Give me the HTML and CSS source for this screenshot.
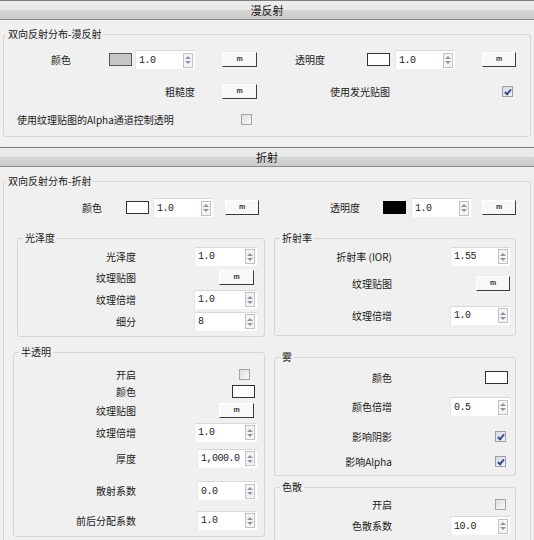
FILE: index.html
```html
<!DOCTYPE html>
<html lang="zh">
<head>
  <meta charset="UTF-8">
  <title>材质参数</title>
  <link rel="stylesheet" href="styles.css">
</head>
<body>
  <div class="panel-head">漫反射</div>

  <fieldset class="group diffuse">
    <legend>双向反射分布-漫反射</legend>
    <div class="diffuse-grid">
      <span class="lbl c1">颜色</span>
      <span class="swatch gray c2"></span>
      <span class="spin c3"><span class="val">1.0</span><span class="arrows"></span></span>
      <span class="btn-m c4">m</span>
      <span class="lbl c5">透明度</span>
      <span class="swatch c6"></span>
      <span class="spin c7"><span class="val">1.0</span><span class="arrows"></span></span>
      <span class="btn-m c8">m</span>

      <span class="lbl left-span">粗糙度</span>
      <span class="btn-m c4">m</span>
      <span class="lbl right-span">使用发光贴图</span>
      <span class="check on c8"></span>

      <span class="lbl long-label">使用纹理贴图的Alpha通道控制透明</span>
      <span class="check c4 alpha-check"></span>
    </div>
  </fieldset>

  <div class="panel-head">折射</div>

  <fieldset class="group refract">
    <legend>双向反射分布-折射</legend>
    <div class="refract-top">
      <span class="lbl c1">颜色</span>
      <span class="swatch c2"></span>
      <span class="spin c3"><span class="val">1.0</span><span class="arrows"></span></span>
      <span class="btn-m c4">m</span>
      <span class="lbl c5">透明度</span>
      <span class="swatch black c6"></span>
      <span class="spin c7"><span class="val">1.0</span><span class="arrows"></span></span>
      <span class="btn-m c8">m</span>
    </div>

    <div class="sub-columns">
      <div class="col left-col">
        <fieldset class="group sub gloss">
          <legend>光泽度</legend>
          <div class="rows">
            <span class="lbl">光泽度</span>
            <span class="spin wide"><span class="val">1.0</span><span class="arrows"></span></span>
            <span class="lbl">纹理贴图</span>
            <span class="btn-m">m</span>
            <span class="lbl">纹理倍增</span>
            <span class="spin wide"><span class="val">1.0</span><span class="arrows"></span></span>
            <span class="lbl">细分</span>
            <span class="spin wide"><span class="val">8</span><span class="arrows"></span></span>
          </div>
        </fieldset>

        <fieldset class="group sub trans">
          <legend>半透明</legend>
          <div class="rows">
            <span class="lbl">开启</span>
            <span class="check"></span>
            <span class="lbl">颜色</span>
            <span class="swatch"></span>
            <span class="lbl">纹理贴图</span>
            <span class="btn-m">m</span>
            <span class="lbl">纹理倍增</span>
            <span class="spin wide"><span class="val">1.0</span><span class="arrows"></span></span>
            <span class="lbl">厚度</span>
            <span class="spin"><span class="val">1,000.0</span><span class="arrows"></span></span>
            <span class="lbl">散射系数</span>
            <span class="spin"><span class="val">0.0</span><span class="arrows"></span></span>
            <span class="lbl">前后分配系数</span>
            <span class="spin"><span class="val">1.0</span><span class="arrows"></span></span>
          </div>
        </fieldset>
      </div>

      <div class="col right-col">
        <fieldset class="group sub ior">
          <legend>折射率</legend>
          <div class="rows">
            <span class="lbl">折射率 (IOR)</span>
            <span class="spin"><span class="val">1.55</span><span class="arrows"></span></span>
            <span class="lbl">纹理贴图</span>
            <span class="btn-m">m</span>
            <span class="lbl">纹理倍增</span>
            <span class="spin"><span class="val">1.0</span><span class="arrows"></span></span>
          </div>
        </fieldset>

        <fieldset class="group sub fog">
          <legend>雾</legend>
          <div class="rows">
            <span class="lbl">颜色</span>
            <span class="swatch"></span>
            <span class="lbl">颜色倍增</span>
            <span class="spin"><span class="val">0.5</span><span class="arrows"></span></span>
            <span class="lbl">影响阴影</span>
            <span class="check on"></span>
            <span class="lbl">影响Alpha</span>
            <span class="check on"></span>
          </div>
        </fieldset>

        <fieldset class="group sub disp">
          <legend>色散</legend>
          <div class="rows">
            <span class="lbl">开启</span>
            <span class="check"></span>
            <span class="lbl">色散系数</span>
            <span class="spin"><span class="val">10.0</span><span class="arrows"></span></span>
          </div>
        </fieldset>
      </div>
    </div>
  </fieldset>
</body>
</html>
```

FILE: styles.css
```css
body {
  margin: 0;
  background: #f0f0f0;
  font-family: "Noto Sans CJK SC", "Noto Sans", sans-serif;
  font-size: 10px;
  color: #1a1a1a;
}

.panel-head {
  height: 18px;
  line-height: 18px;
  border-top: 1px solid #7d7d7d;
  border-bottom: 1px solid #8a8a8a;
  background: linear-gradient(#ececec 0, #e7e7e7 50%, #d4d4d4 50%, #cccccc 100%);
  text-align: center;
  font-size: 11px;
}

/* group boxes */
.group {
  margin: 7px 3px 0;
  padding: 0;
  border: 1px solid #d6d6d6;
  border-radius: 3px;
  min-width: 0;
}

.group legend {
  margin-left: 2px;
  padding: 0 2px;
  line-height: 14px;
  font-size: 10px;
}

.diffuse {
  margin-bottom: 10px;
  padding: 5px 0 7px;
}

.refract {
  padding: 10px 0 4px;
}

.lbl {
  white-space: nowrap;
}

/* controls */
.swatch {
  box-sizing: border-box;
  width: 23px;
  height: 13px;
  border: 1px solid #333;
  background: #fff;
}

.swatch.gray {
  border-color: #555;
  background: #c6c6c6;
}

.swatch.black {
  background: #000;
  border-color: #000;
}

.spin {
  box-sizing: border-box;
  display: flex;
  align-items: center;
  width: 60px;
  height: 19px;
  background: #fff;
  border-top: 1px solid #d9d9d9;
  border-left: 1px solid #e6e6e6;
}

.spin.wide {
  width: 63px;
}

.spin .val {
  padding-left: 3px;
  font-family: "Liberation Mono", "DejaVu Sans Mono", monospace;
  font-size: 10px;
  letter-spacing: -0.5px;
  color: #222;
}

.arrows {
  box-sizing: border-box;
  width: 10px;
  height: 15px;
  margin: 0 2px 0 auto;
  border: 1px solid #c2c2c2;
  background: #f4f4f4;
  display: flex;
  flex-direction: column;
  align-items: center;
  justify-content: center;
  gap: 2px;
}

.arrows::before {
  content: "";
  border: 3px solid transparent;
  border-top: 0;
  border-bottom: 3px solid #8d96a6;
}

.arrows::after {
  content: "";
  border: 3px solid transparent;
  border-bottom: 0;
  border-top: 3px solid #8d96a6;
}

.btn-m {
  box-sizing: border-box;
  width: 35px;
  height: 15px;
  line-height: 12px;
  text-align: center;
  background: #f8f8f8;
  border: 1px solid;
  border-color: #ffffff #3c3c3c #3c3c3c #ffffff;
  font-family: "Liberation Sans", sans-serif;
  font-size: 7px;
  font-weight: bold;
  color: #333;
}

.check {
  box-sizing: border-box;
  width: 11px;
  height: 11px;
  border: 1px solid #a3a3a3;
  background: linear-gradient(135deg, #dedede, #fafafa);
  display: flex;
  justify-content: center;
}

.check.on {
  border-color: #9aa0aa;
  background: linear-gradient(135deg, #d5dbe4, #f4f6f9);
}

.check.on::after {
  content: "";
  width: 2px;
  height: 5px;
  margin-top: 1px;
  border-right: 2px solid #34508a;
  border-bottom: 2px solid #34508a;
  transform: rotate(40deg);
}

/* top grids: columns follow the control positions of the panel */
.diffuse-grid,
.refract-top {
  display: grid;
  align-items: center;
}

.diffuse-grid {
  grid-template-columns: 105px 26px 62px 70px 100px 28px 87px 1fr;
  grid-template-rows: 27px 36px 20px;
}

.refract-top {
  grid-template-columns: 122px 27px 72px 42px 116px 28px 71px 1fr;
  grid-template-rows: 19px;
}

.c1 { grid-column: 1; text-align: right; }
.c2 { grid-column: 2; }
.c3 { grid-column: 3; }
.c4 { grid-column: 4; }
.c5 { grid-column: 5; text-align: right; }
.c6 { grid-column: 6; }
.c7 { grid-column: 7; }
.c8 { grid-column: 8; }

.diffuse-grid .c1 { padding-right: 38px; }
.diffuse-grid .c5 { padding-right: 42px; }
.diffuse-grid .btn-m.c4 { margin-left: 25px; }
.diffuse-grid .btn-m.c8 { width: 34px; }
.diffuse-grid .check.c8 { margin-left: 20px; }

.left-span {
  grid-column: 1 / 4;
  text-align: right;
  padding-right: 2px;
}

.right-span {
  grid-column: 5 / 7;
  text-align: right;
  padding-right: 5px;
}

.long-label {
  grid-column: 1 / 4;
  padding-left: 13px;
}

.diffuse-grid .alpha-check {
  margin-left: 44px;
}

.refract-top .c1 { padding-right: 24px; }
.refract-top .c5 { padding-right: 23px; }
.refract-top .btn-m { width: 34px; }

/* sub groups */
.sub-columns {
  display: grid;
  grid-template-columns: 252px 242px;
  column-gap: 9px;
  padding-left: 9px;
  margin-top: 14px;
  align-items: start;
}

.col {
  display: flex;
  flex-direction: column;
}

.sub {
  margin: 0;
}

.sub legend {
  margin-left: 5px;
}

.sub .rows {
  display: grid;
  grid-template-columns: 1fr 115px;
  align-items: center;
}

.sub .rows .lbl {
  text-align: right;
  padding-right: 13px;
}

.sub .rows > :nth-child(even) {
  justify-self: end;
}

.left-col .spin { margin-right: 7px; }
.left-col .btn-m { margin-right: 10px; }
.left-col .check { margin-right: 14px; }
.left-col .swatch { margin-right: 9px; }

.right-col .rows .lbl { padding-right: 8px; }
.right-col .spin { margin-right: 5px; }
.right-col .btn-m { margin-right: 5px; width: 34px; }
.right-col .check { margin-right: 9px; }
.right-col .swatch { margin-right: 7px; }

.gloss {
  margin-left: 4px;
  padding: 1px 0 4px;
}

.gloss .rows {
  grid-template-rows: 20px 22px 22px 22px;
}

.trans {
  margin-top: 8px;
  padding: 6px 0 4px;
}

.trans .rows {
  grid-template-rows: 18px 16px 22px 22px 30px 35px 24px;
}

.ior {
  padding: 1px 0 5px;
}

.ior .rows {
  grid-template-rows: 20px 34px 30px;
}

.fog {
  margin-top: 14px;
  padding: 2px 0 0;
}

.fog .rows {
  grid-template-rows: 22px 37px 22px 28px;
}

.disp {
  margin-top: 4px;
  padding: 1px 0 4px;
}

.disp .rows {
  grid-template-rows: 18px 25px;
}
```
